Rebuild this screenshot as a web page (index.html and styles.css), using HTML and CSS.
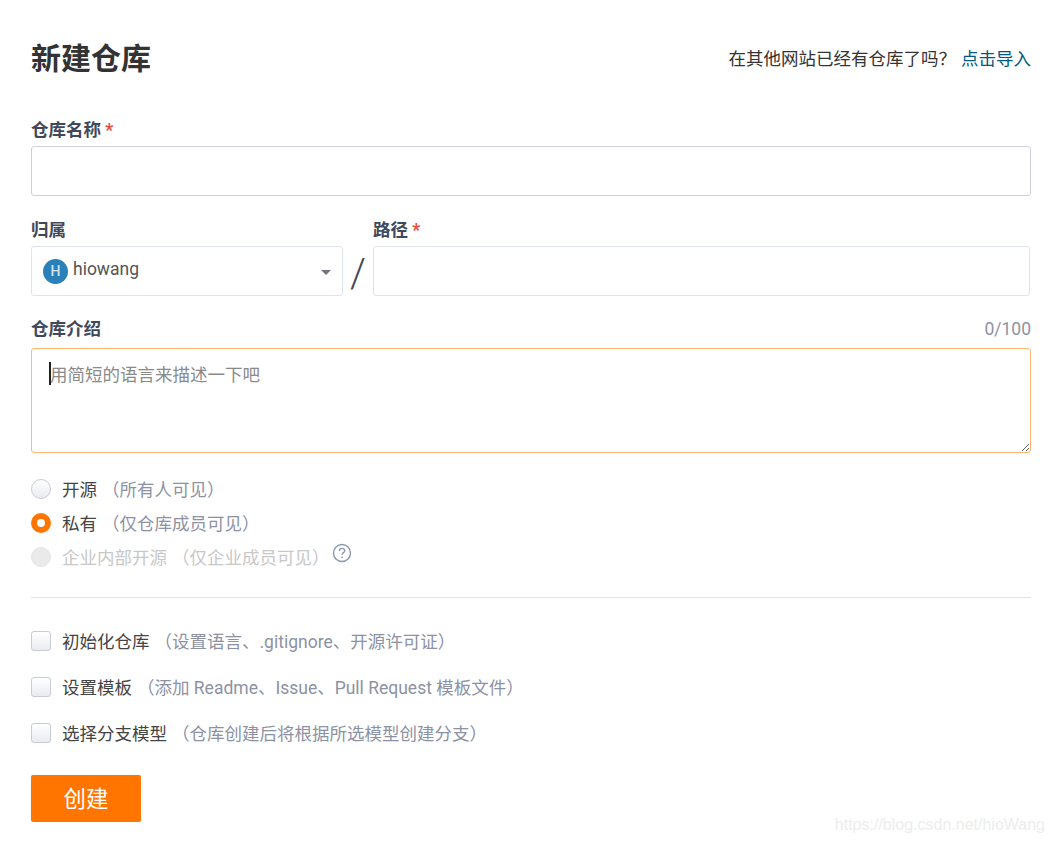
FILE: index.html
```html
<!DOCTYPE html>
<html lang="zh-CN">
<head>
  <meta charset="UTF-8">
  <meta name="viewport" content="width=device-width, initial-scale=1.0">
  <title>新建仓库</title>
  <link rel="stylesheet" href="styles.css">
</head>
<body>

  <form class="page">
    <div class="page-header">
      <h2>新建仓库</h2>
      <p class="import-tip">在其他网站已经有仓库了吗？<a href="#" class="import-link">点击导入</a></p>
    </div>

    <div class="field field-name">
      <label class="field-label">仓库名称 <span class="required">*</span></label>
      <input type="text" class="text-input text-input-strong">
    </div>

    <div class="path-row">
      <div class="field owner-col">
        <label class="field-label">归属</label>
        <div class="owner-select">
          <span class="avatar">H</span>
          <span class="owner-name">hiowang</span>
          <span class="caret-down"></span>
        </div>
      </div>
      <span class="slash">/</span>
      <div class="field path-col">
        <label class="field-label">路径 <span class="required">*</span></label>
        <input type="text" class="text-input">
      </div>
    </div>

    <div class="field field-desc">
      <div class="label-row">
        <label class="field-label">仓库介绍</label>
        <span class="counter">0/100</span>
      </div>
      <div class="desc-box">
        <textarea class="desc-input" placeholder="用简短的语言来描述一下吧"></textarea>
        <span class="text-cursor"></span>
      </div>
    </div>

    <div class="radio-group">
      <label class="option radio-option">
        <input type="radio" name="visibility">
        <span class="option-text">开源</span>
        <span class="option-hint">（所有人可见）</span>
      </label>
      <label class="option radio-option">
        <input type="radio" name="visibility" checked>
        <span class="option-text">私有</span>
        <span class="option-hint">（仅仓库成员可见）</span>
      </label>
      <label class="option radio-option option-disabled">
        <input type="radio" name="visibility" disabled>
        <span class="option-text">企业内部开源</span>
        <span class="option-hint">（仅企业成员可见）</span>
        <svg class="help-icon" width="20" height="20" viewBox="0 0 20 20" fill="none">
          <circle cx="10" cy="10" r="8.5" stroke="#8c96b0" stroke-width="1.4"/>
          <path d="M7.4 8c0-1.6 1.1-2.6 2.7-2.6 1.5 0 2.6 1 2.6 2.3 0 1.9-2.6 2-2.6 4" stroke="#8c96b0" stroke-width="1.4"/>
          <circle cx="10.1" cy="14.3" r="0.9" fill="#8c96b0"/>
        </svg>
      </label>
    </div>

    <div class="divider"></div>

    <div class="check-group">
      <label class="option">
        <input type="checkbox">
        <span class="option-text">初始化仓库</span>
        <span class="option-hint">（设置语言、.gitignore、开源许可证）</span>
      </label>
      <label class="option">
        <input type="checkbox">
        <span class="option-text">设置模板</span>
        <span class="option-hint">（添加 Readme、Issue、Pull Request 模板文件）</span>
      </label>
      <label class="option">
        <input type="checkbox">
        <span class="option-text">选择分支模型</span>
        <span class="option-hint">（仓库创建后将根据所选模型创建分支）</span>
      </label>
    </div>

    <button type="submit" class="submit-btn">创建</button>
  </form>

  <div class="watermark">https://blog.csdn.net/hioWang</div>

</body>
</html>
```

FILE: styles.css
```css
body {
  font-family: Roboto, "Noto Sans CJK SC", sans-serif;
  margin: 0;
  padding: 0;
  background-color: white;
  color: #40485b;
  font-size: 17.5px;
  height: 843px;
  overflow: hidden;
  position: relative;
}

.page {
  width: 1000px;
  margin-left: 31px;
  padding-top: 39px;
}

.page-header {
  display: flex;
  justify-content: space-between;
  align-items: center;
  height: 40px;
}

h2 {
  margin: 0;
  font-size: 30px;
  line-height: 40px;
  font-weight: bold;
  color: #333;
}

.import-tip {
  margin: 0;
  line-height: 40px;
  color: #333;
}

.import-link {
  margin-left: 5px;
  color: #005980;
  text-decoration: none;
}

.field-label {
  display: block;
  font-weight: bold;
  line-height: 24px;
  color: #40485b;
}

.required {
  color: #e74c3c;
}

.field-name {
  margin-top: 39px;
}

.path-row .field-label {
  height: 28px;
}

.field-name .field-label {
  height: 28px;
}

.text-input {
  display: block;
  width: 100%;
  height: 50px;
  border: 1px solid #dfe3ea;
  border-radius: 3px;
  background: white;
  box-sizing: border-box;
  outline: none;
}

.text-input-strong {
  border-color: #cfcfdd;
}

.path-row {
  display: flex;
  margin-top: 22px;
}

.owner-col {
  width: 312px;
}

.path-col {
  width: 657px;
}

.owner-select {
  display: flex;
  align-items: center;
  height: 50px;
  padding: 0 11px;
  border: 1px solid #dfe3ea;
  border-radius: 3px;
  box-sizing: border-box;
}

.avatar {
  width: 25px;
  height: 25px;
  border-radius: 50%;
  background-color: #2a80b9;
  color: #cfe3f0;
  font-size: 14px;
  font-weight: 500;
  line-height: 25px;
  text-align: center;
  flex-shrink: 0;
}

.owner-name {
  margin-left: 5px;
  margin-top: -5px;
  flex: 1;
  color: #555;
}

.caret-down {
  width: 0;
  height: 0;
  margin-top: 3px;
  border-left: 5px solid transparent;
  border-right: 5px solid transparent;
  border-top: 5px solid #6f7480;
}

.slash {
  width: 30px;
  height: 47px;
  margin-top: 31px;
  font-size: 40px;
  line-height: 50px;
  text-align: center;
  font-weight: 300;
  color: #40485b;
}

.field-desc {
  margin-top: 21px;
}

.label-row {
  display: flex;
  justify-content: space-between;
  height: 31px;
}

.counter {
  color: #8c92a4;
  font-size: 17.5px;
  line-height: 24px;
}

.desc-box {
  position: relative;
  height: 105px;
}

.desc-input {
  display: block;
  width: 100%;
  height: 105px;
  padding: 13px 18px;
  border: 1px solid #ffb871;
  border-radius: 3px;
  font-family: inherit;
  font-size: 17.5px;
  line-height: 26px;
  box-sizing: border-box;
  outline: none;
  caret-color: transparent;
}

.desc-input::placeholder {
  color: #8a8a8a;
  opacity: 1;
}

/* the blinking caret, held still */
.text-cursor {
  position: absolute;
  left: 18px;
  top: 14px;
  width: 2px;
  height: 23px;
  background-color: #222;
}

.radio-group {
  margin-top: 19px;
}

.option {
  display: flex;
  align-items: center;
  height: 34px;
  color: #444;
}

.option input {
  appearance: none;
  width: 20px;
  height: 20px;
  margin: 0 11px 0 0;
  border: 1px solid #c9ccd6;
  background: linear-gradient(#ffffff, #e9ebf0);
  box-sizing: border-box;
  flex-shrink: 0;
}

.option input[type="radio"] {
  border-radius: 50%;
}

.option input[type="checkbox"] {
  border-radius: 3px;
}

.option input:checked {
  border: 6px solid #ff7500;
  background: white;
}

.option input:disabled {
  border-color: #e4e4e4;
  background: #eaeaea;
}

.option-text,
.option-hint {
  margin-top: -2px;
}

.option-hint {
  margin-left: 5px;
  color: #8c92a4;
}

.option-disabled .option-text,
.option-disabled .option-hint {
  color: #c8c8c8;
}

.help-icon {
  margin-left: 2px;
  margin-top: -8px;
}

.divider {
  height: 1px;
  margin-top: 23px;
  background-color: #e3e3e3;
}

.check-group {
  margin-top: 26px;
  display: flex;
  flex-direction: column;
  gap: 12px;
}

.submit-btn {
  display: block;
  width: 110px;
  height: 47px;
  margin-top: 25px;
  padding: 0 0 3px;
  border: none;
  border-radius: 2px;
  background-color: #ff7500;
  color: white;
  font-family: inherit;
  font-size: 22.5px;
  cursor: pointer;
}

.watermark {
  position: absolute;
  right: 8px;
  top: 815px;
  font-family: "Liberation Sans", sans-serif;
  font-size: 16px;
  line-height: 20px;
  color: #ededed;
}
```
